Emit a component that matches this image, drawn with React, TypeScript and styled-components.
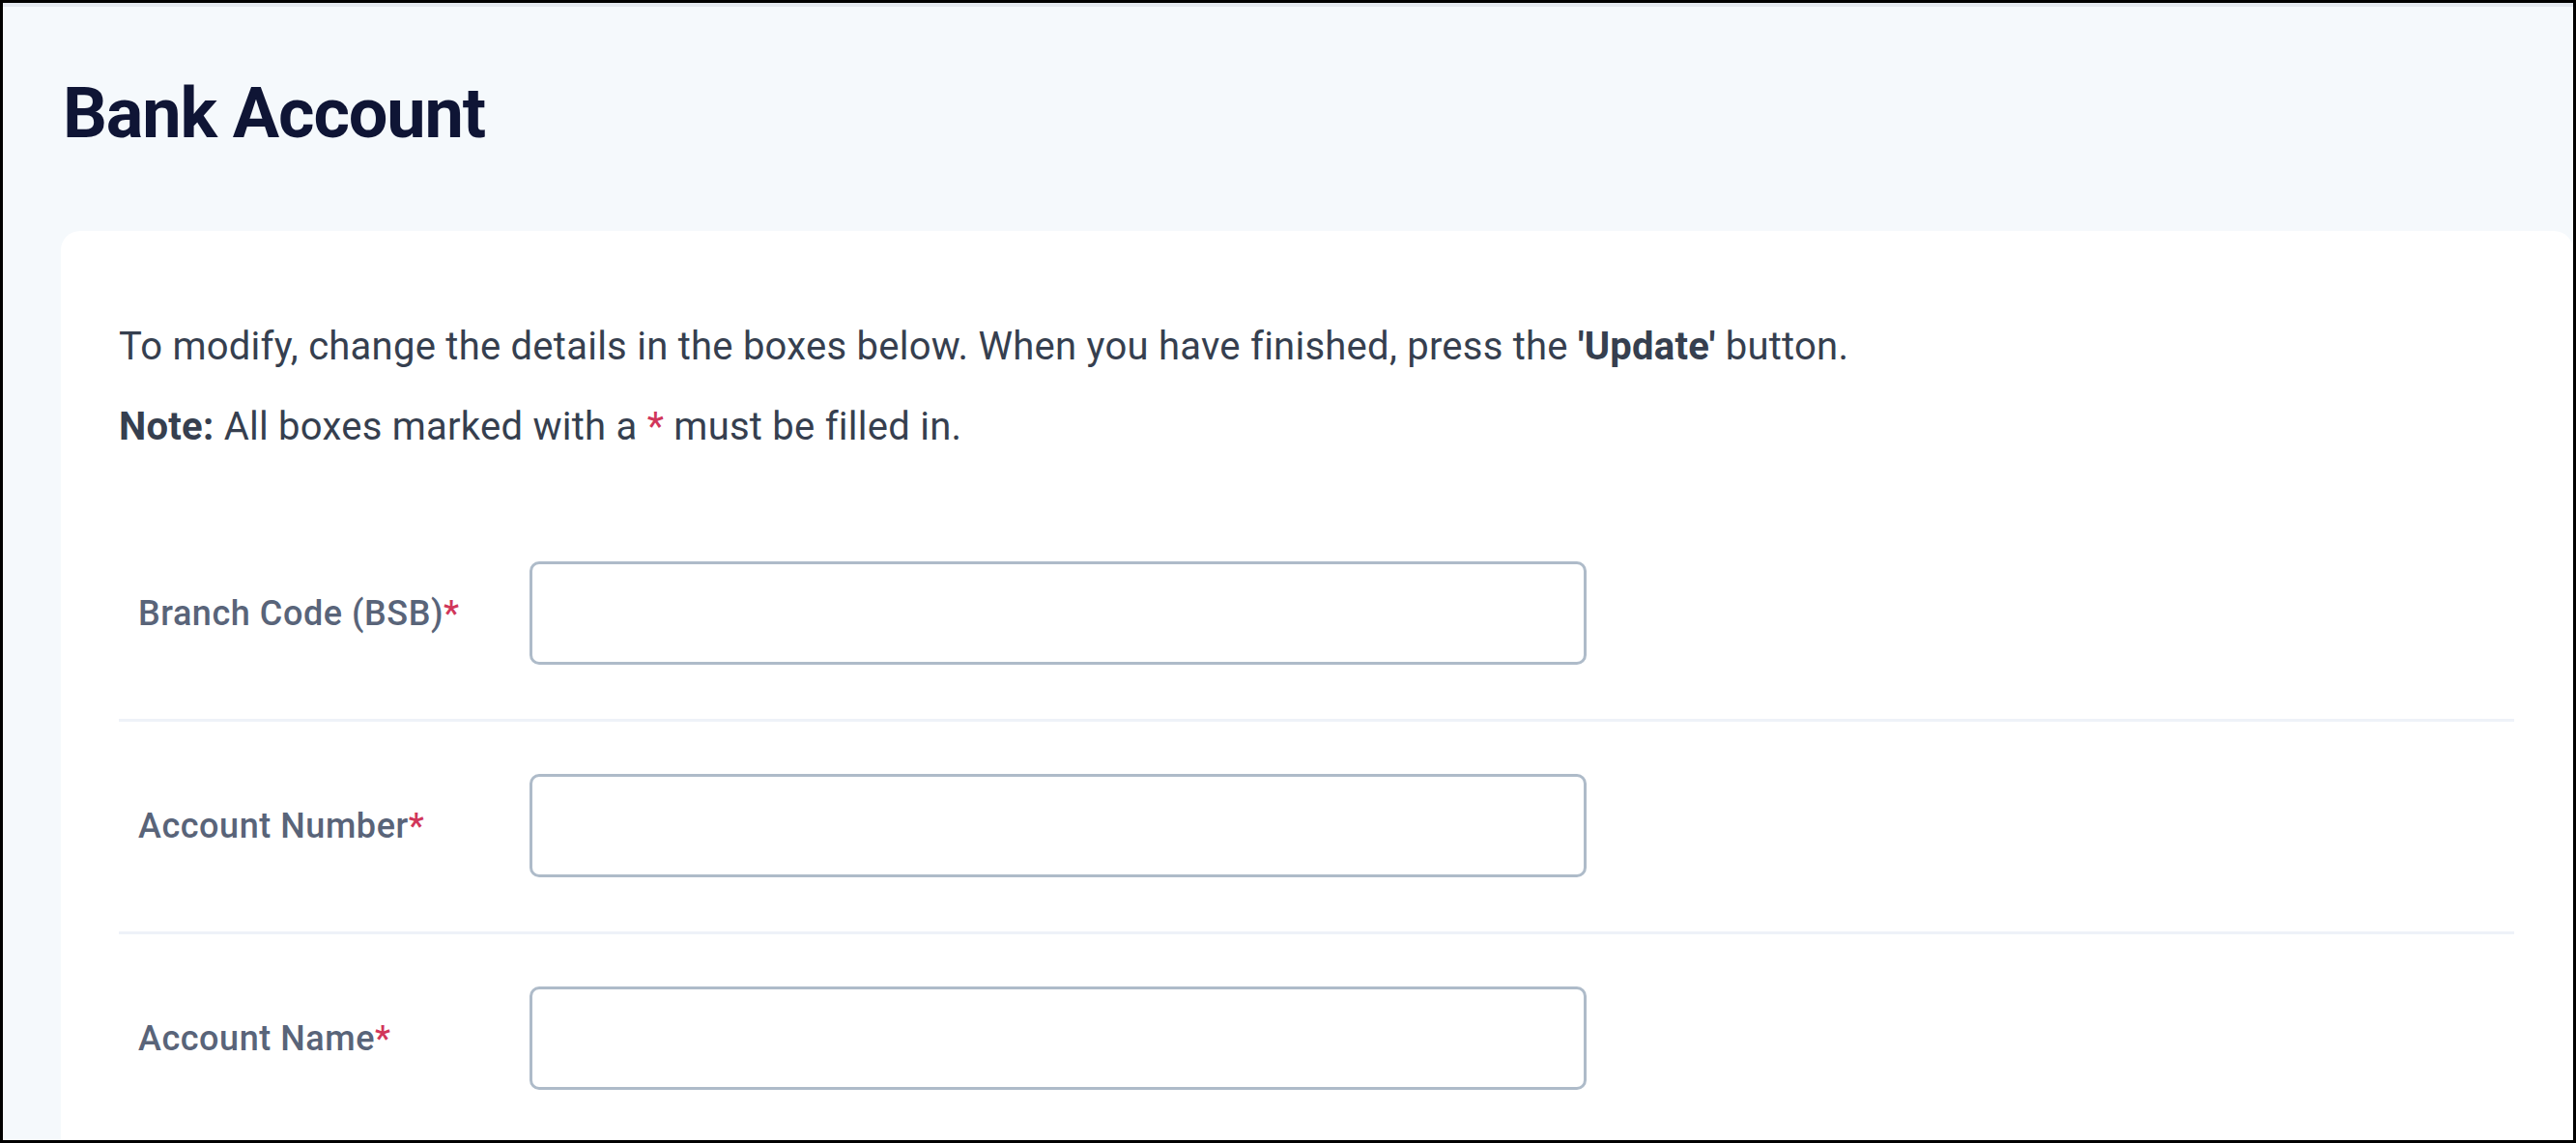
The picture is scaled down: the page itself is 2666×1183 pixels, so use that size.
import React from "react";
import styled, { createGlobalStyle } from "styled-components";

const GlobalStyle = createGlobalStyle`
  html, body { margin: 0; padding: 0; background: #000; }
  * { box-sizing: border-box; }
  body { font-family: Roboto, "Noto Sans", Arial, sans-serif; }
`;

const Frame = styled.div`
  width: 2666px;
  height: 1183px;
  border: 3px solid #000;
  background: #f5f9fc;
  overflow: hidden;
  display: flex;
  flex-direction: column;
`;

const TopStripe = styled.div`
  height: 4px;
  background: #e4e9f0;
  flex: none;
`;

const Header = styled.header`
  padding: 74px 0 85px 62px;
  flex: none;
`;

const Title = styled.h1`
  margin: 0;
  font-family: Roboto, Arial, sans-serif;
  font-weight: 700;
  font-size: 72px;
  line-height: 73px;
  letter-spacing: -1.1px;
  color: #0f1535;
`;

const Card = styled.main`
  flex: 1;
  margin-left: 60px;
  background: #ffffff;
  border-radius: 20px 20px 0 0;
  padding: 60px 61px 0 60px;
`;

const Intro = styled.p<{ $first?: boolean }>`
  margin: ${(p) => (p.$first ? "30px 0 0" : "23px 0 0")};
  font-size: 40px;
  line-height: 60px;
  letter-spacing: 0.25px;
  color: #363f4f;
`;

const Strong = styled.strong`
  font-weight: 700;
`;

const Req = styled.span`
  color: #d1365a;
`;

const Form = styled.form`
  margin-top: 55px;
  display: flex;
  flex-direction: column;
`;

const Row = styled.div`
  display: flex;
  align-items: center;
  padding: 54px 0 56px 20px;
  border-bottom: 3px solid #eef2f8;
`;

const Label = styled.label`
  width: 405px;
  flex: none;
  font-size: 36px;
  font-weight: 500;
  letter-spacing: 0.55px;
  color: #596479;
`;

const Input = styled.input`
  width: 1094px;
  height: 107px;
  border: 3px solid #aebbc9;
  border-radius: 10px;
  background: #fff;
  font-size: 36px;
  padding: 0 24px;
  outline: none;
`;

const fields = [
  { id: "bsb", label: "Branch Code (BSB)" },
  { id: "num", label: "Account Number" },
  { id: "name", label: "Account Name" },
];

export default function App() {
  return (
    <>
      <GlobalStyle />
      <Frame>
        <TopStripe />
        <Header>
          <Title>Bank Account</Title>
        </Header>
        <Card>
          <Intro $first>
            To modify, change the details in the boxes below. When you have finished, press the{" "}
            <Strong>'Update'</Strong> button.
          </Intro>
          <Intro>
            <Strong>Note:</Strong> All boxes marked with a <Req>*</Req> must be filled in.
          </Intro>
          <Form>
            {fields.map((f) => (
              <Row key={f.id}>
                <Label htmlFor={f.id}>
                  {f.label}
                  <Req>*</Req>
                </Label>
                <Input id={f.id} type="text" />
              </Row>
            ))}
          </Form>
        </Card>
      </Frame>
    </>
  );
}
